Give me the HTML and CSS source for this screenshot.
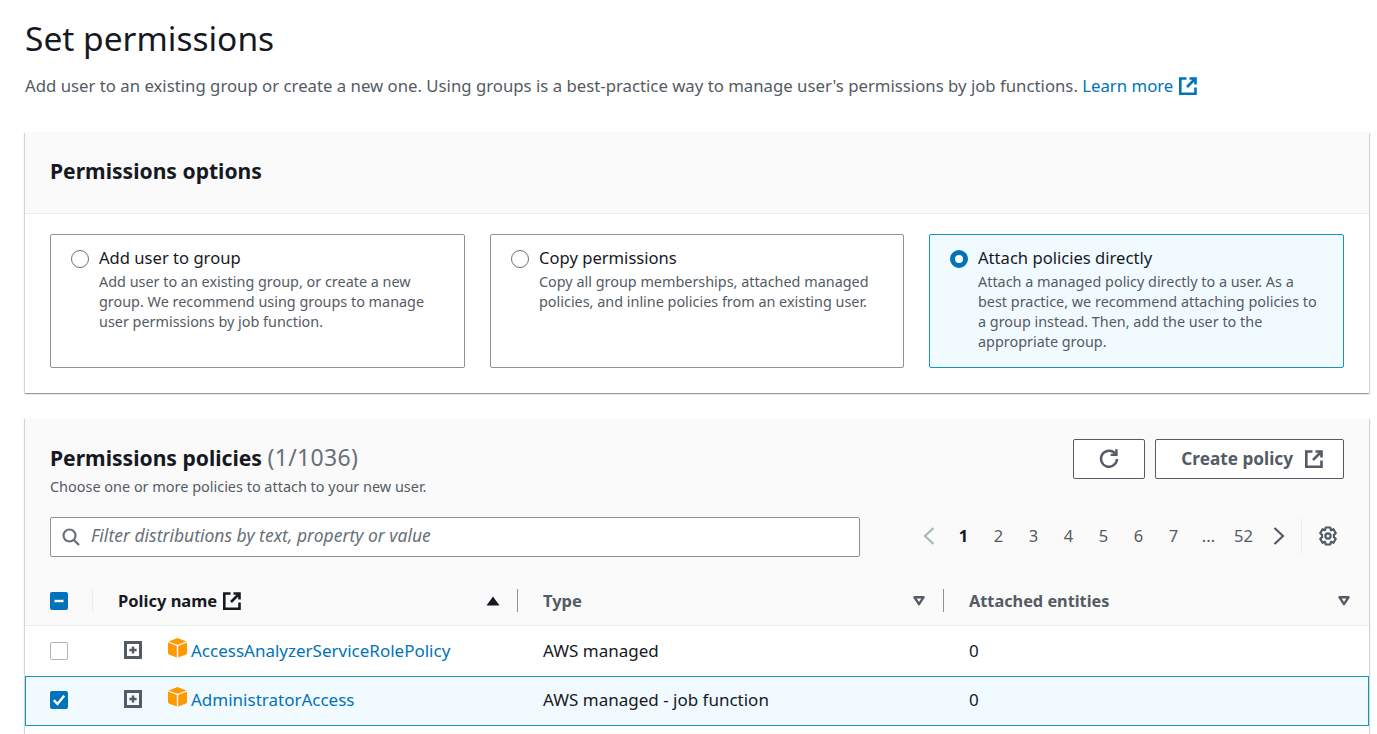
FILE: index.html
```html
<!DOCTYPE html>
<html lang="en">
<head>
<meta charset="utf-8">
<title>Set permissions</title>
<link rel="stylesheet" href="styles.css">
</head>
<body>
<svg class="defs" width="0" height="0" aria-hidden="true">
  <symbol id="ext" viewBox="0 0 18 18">
    <path d="M7.5 1.5H1.3V16.7H16.5V10.5" fill="none" stroke="currentColor" stroke-width="2.6"/>
    <path d="M10.5 1.5H16.5V7.5M16 2L8 10" fill="none" stroke="currentColor" stroke-width="2.6"/>
  </symbol>
  <symbol id="plus" viewBox="0 0 18 18">
    <rect x="1.5" y="1.5" width="15" height="15" fill="none" stroke="currentColor" stroke-width="3"/>
    <path d="M9 5.4V12.6M5.4 9H12.6" stroke="currentColor" stroke-width="2.4"/>
  </symbol>
  <symbol id="cube" viewBox="0 0 19 20">
    <path d="M9.5 0L18.5 3.4L9.5 6.8L.5 3.4Z" fill="#f90"/>
    <path d="M0 4.6L8.8 7.9V19.6L1.4 16.7Q0 16.2 0 14.8Z" fill="#f90"/>
    <path d="M19 4.6L10.2 7.9V19.6L17.6 16.7Q19 16.2 19 14.8Z" fill="#f90"/>
  </symbol>
  <symbol id="sortdown" viewBox="0 0 12 10">
    <path d="M1.5 1.3H10.5L6 8.2Z" fill="none" stroke="currentColor" stroke-width="2.4" stroke-linejoin="round"/>
  </symbol>
</svg>
<main class="page">
  <h1 class="title">Set permissions</h1>
  <p class="lead">Add user to an existing group or create a new one. Using groups is a best-practice way to manage user's permissions by job functions. <a class="link learn" href="#">Learn more <svg class="ext-learn"><use href="#ext"/></svg></a></p>

  <section class="card options-card">
    <header class="options-head"><h2 class="h2">Permissions options</h2></header>
    <div class="tiles">
      <div class="tile">
        <span class="radio"></span>
        <div><div class="tile-label">Add user to group</div><div class="tile-desc">Add user to an existing group, or create a new group. We recommend using groups to manage user permissions by job function.</div></div>
      </div>
      <div class="tile">
        <span class="radio"></span>
        <div><div class="tile-label">Copy permissions</div><div class="tile-desc">Copy all group memberships, attached managed policies, and inline policies from an existing user.</div></div>
      </div>
      <div class="tile tile-on">
        <span class="radio radio-on"></span>
        <div><div class="tile-label">Attach policies directly</div><div class="tile-desc">Attach a managed policy directly to a user. As a best practice, we recommend attaching policies to a group instead. Then, add the user to the appropriate group.</div></div>
      </div>
    </div>
  </section>

  <section class="card policies-card">
    <div class="pol-top">
      <div class="pol-head">
        <div class="pol-title-row">
          <h2 class="h2 pol-title">Permissions policies <span class="count">(1/1036)</span></h2>
          <div class="actions">
            <button class="btn btn-icon" aria-label="Refresh"><svg width="22" height="22" viewBox="0 0 22 22"><path d="M17.6 6.2A8 8 0 1 0 19 11" fill="none" stroke="currentColor" stroke-width="2.4"/><path d="M18.4 1.2V6.9H12.7" fill="none" stroke="currentColor" stroke-width="2.4"/></svg></button>
            <button class="btn">Create policy <svg class="ext-btn"><use href="#ext"/></svg></button>
          </div>
        </div>
        <p class="pol-desc">Choose one or more policies to attach to your new user.</p>
      </div>
      <div class="tools">
        <label class="filter">
          <svg width="20" height="20" viewBox="0 0 20 20"><circle cx="8.5" cy="8.5" r="6" fill="none" stroke="currentColor" stroke-width="2.2"/><path d="M13 13L18 18" stroke="currentColor" stroke-width="2.4"/></svg>
          <span class="filter-text">Filter distributions by text, property or value</span>
        </label>
        <nav class="pager">
          <svg class="chev chev-off" viewBox="0 0 14 20"><path d="M11.5 2L3 10L11.5 18" fill="none" stroke="currentColor" stroke-width="2.2"/></svg>
          <span class="pg pg-on">1</span><span class="pg">2</span><span class="pg">3</span><span class="pg">4</span><span class="pg">5</span><span class="pg">6</span><span class="pg">7</span><span class="pg">...</span><span class="pg">52</span>
          <svg class="chev chev-next" viewBox="0 0 14 20"><path d="M2.5 2L11 10L2.5 18" fill="none" stroke="currentColor" stroke-width="2.2"/></svg>
          <span class="tool-sep"></span>
          <svg class="gear" viewBox="0 0 20 20"><path d="M7.7 1.5H12.3L13 4.2L15.5 3.2L17.8 7.2L15.9 8.9V11.1L17.8 12.8L15.5 16.8L13 15.8L12.3 18.5H7.7L7 15.8L4.5 16.8L2.2 12.8L4.1 11.1V8.9L2.2 7.2L4.5 3.2L7 4.2Z" fill="none" stroke="currentColor" stroke-width="2.2" stroke-linejoin="round"/><circle cx="10" cy="10" r="2.6" fill="none" stroke="currentColor" stroke-width="2.2"/></svg>
        </nav>
      </div>
    </div>
    <div class="row row-head">
      <div class="c-check"><span class="cb cb-on"><svg viewBox="0 0 18 18"><path d="M4.5 9H13.5" stroke="#fff" stroke-width="2.4"/></svg></span><span class="th-sep"></span></div>
      <div class="c-name th">Policy name <svg class="ext-th"><use href="#ext"/></svg><svg class="sort-up" viewBox="0 0 14 10"><path d="M7 .5L13.5 9.5H.5Z" fill="currentColor"/></svg><span class="th-sep dark"></span></div>
      <div class="c-type th th-soft">Type<svg class="sort-dn"><use href="#sortdown"/></svg><span class="th-sep dark"></span></div>
      <div class="c-ent th th-soft th-ent">Attached entities<svg class="sort-dn sort-last"><use href="#sortdown"/></svg></div>
    </div>
    <div class="row row-item">
      <div class="c-check"><span class="cb"></span></div>
      <div class="c-name"><svg class="expand"><use href="#plus"/></svg><svg class="cube"><use href="#cube"/></svg><a class="link" href="#">AccessAnalyzerServiceRolePolicy</a></div>
      <div class="c-type">AWS managed</div>
      <div class="c-ent">0</div>
    </div>
    <div class="row row-item row-on">
      <div class="c-check"><span class="cb cb-on"><svg viewBox="0 0 18 18"><path d="M3.8 9.2L7.5 13L14.2 4.8" fill="none" stroke="#fff" stroke-width="2.4"/></svg></span></div>
      <div class="c-name"><svg class="expand"><use href="#plus"/></svg><svg class="cube"><use href="#cube"/></svg><a class="link" href="#">AdministratorAccess</a></div>
      <div class="c-type">AWS managed - job function</div>
      <div class="c-ent">0</div>
    </div>
  </section>
</main>
</body>
</html>
```

FILE: styles.css
```css
* { box-sizing: border-box; }
html, body { margin: 0; height: 734px; overflow: hidden; background: #fff; }
body { font-family: "Noto Sans", "Open Sans", sans-serif; color: #16191f; font-size: 17px; }
.defs { position: absolute; }
.page { padding: 0 8px 0 25px; width: 1377px; }
.title { margin: 0; padding-top: 16px; height: 66px; font-size: 33.5px; line-height: 44px; font-weight: 400; }
.lead { margin: 0; height: 49px; padding-top: 8px; font-size: 16.76px; line-height: 24px; color: #545b64; white-space: nowrap; }
.link { color: #0073bb; text-decoration: none; }
.learn { display: inline-flex; align-items: center; gap: 6px; }
.ext-learn { width: 18px; height: 18px; }
.card { background: #fff; box-shadow: 0 1px 1px rgba(0,28,36,.18), 1px 1px 1px rgba(0,28,36,.16), -1px 1px 1px rgba(0,28,36,.16); }
.options-card { height: 261px; margin-top: 17px; }
.options-head { height: 82px; background: #fafafa; border-bottom: 1px solid #eaeded; padding: 24px 25px; }
.h2 { margin: 0; font-size: 21.1px; line-height: 30px; font-weight: 700; }
.tiles { display: grid; grid-template-columns: 415px 414px 415px; gap: 25px; padding: 20px 25px; }
.tile { height: 134px; border: 1px solid #879596; border-radius: 2px; padding: 12px 20px; display: flex; gap: 10px; }
.tile-on { border-color: #1a93bf; background: #f1faff; }
.radio { flex: none; width: 18px; height: 18px; margin-top: 3px; border: 1.5px solid #687078; border-radius: 50%; background: #fff; }
.radio-on { border: 5px solid #0073bb; }
.tile-label { font-size: 16.6px; line-height: 22px; color: #16191f; }
.tile-desc { font-size: 14.4px; line-height: 20px; color: #545b64; margin-top: 3px; }
.policies-card { margin-top: 25px; height: 316px; overflow: hidden; }
.pol-top { height: 164px; background: #fafafa; padding: 21px 25px 0; }
.pol-title-row { display: flex; justify-content: space-between; align-items: flex-start; height: 38px; }
.pol-title { padding-top: 3px; }
.count { font-weight: 400; color: #687078; font-size: 23px; letter-spacing: .35px; }
.actions { display: flex; gap: 10px; }
.btn { height: 40px; padding: 0 20px 0 25px; border: 1px solid #545b64; border-radius: 2px; background: #fff; color: #545b64; font: 700 17.2px/24px "Noto Sans", sans-serif; display: flex; align-items: center; gap: 12px; }
.btn-icon { width: 72px; padding: 0; justify-content: center; }
.ext-btn { width: 18px; height: 18px; }
.pol-desc { margin: 0; font-size: 14.45px; line-height: 20px; color: #545b64; }
.tools { display: flex; justify-content: space-between; align-items: center; margin-top: 20px; height: 40px; }
.filter { width: 810px; height: 40px; border: 1px solid #879596; border-radius: 2px; background: #fff; display: flex; align-items: center; gap: 10px; padding-left: 10px; color: #687078; }
.filter-text { font-style: italic; font-size: 17.5px; line-height: 24px; margin-top: -4px; color: #687078; }
.pager { display: flex; align-items: center; color: #545b64; margin: -2px 6px 0 0; }
.chev { width: 14px; height: 20px; color: #545b64; }
.chev-off { color: #aab7b8; margin-right: 10px; }
.chev-next { margin-left: 11px; }
.pg { width: 35px; text-align: center; font-size: 16.5px; line-height: 24px; }
.pg-on { font-weight: 700; color: #16191f; }
.tool-sep { width: 1px; height: 36px; background: #eaeded; margin: 0 16px 0 15px; }
.gear { width: 20px; height: 20px; }
.row { display: flex; height: 50px; align-items: center; font-size: 17px; position: relative; }
.row-head { height: 44px; background: #fafafa; border-bottom: 1px solid #eaeded; padding-bottom: 6px; font-size: 16.5px; }
.row-on { background: #f1faff; box-shadow: inset 0 0 0 1px #1a93bf; padding-bottom: 2px; }
.c-check { width: 68px; padding-left: 25px; display: flex; align-items: center; flex: none; position: relative; height: 100%; }
.c-name { width: 425px; flex: none; display: flex; align-items: center; position: relative; height: 100%; }
.c-type { width: 426px; flex: none; padding-left: 25px; display: flex; align-items: center; position: relative; height: 100%; }
.c-ent { flex: 1; padding-left: 25px; display: flex; align-items: center; position: relative; height: 100%; padding-right: 19px; }
.row-item .c-type, .row-item .c-ent, .row-item .link { padding-bottom: 2px; }
.th { font-weight: 700; color: #16191f; }
.th-soft { color: #545b64; }
.th-ent { font-size: 16.3px; }
.th-sep { position: absolute; right: 0; top: 7px; width: 1px; height: 23px; background: #eaeded; }
.th-sep.dark { background: #879596; }
.ext-th { width: 18px; height: 18px; margin-left: 6px; color: #16191f; }
.sort-up { width: 14px; height: 10px; margin-left: auto; margin-right: 18px; }
.sort-dn { width: 12px; height: 10px; margin-left: auto; margin-right: 19px; color: #545b64; }
.sort-last { margin-right: 0; }
.c-name.th { padding-left: 25px; }
.cb { width: 18px; height: 18px; border: 1.5px solid #aab7b8; border-radius: 2px; background: #fff; display: block; }
.cb-on { background: #0073bb; border: 0; }
.cb svg { display: block; width: 18px; height: 18px; }
.expand { width: 18px; height: 18px; margin: -2px 0 0 31px; color: #545b64; flex: none; }
.cube { width: 19px; height: 20px; margin: -7px 0 0 26px; flex: none; }
.c-name .link { margin-left: 4px; }
```
